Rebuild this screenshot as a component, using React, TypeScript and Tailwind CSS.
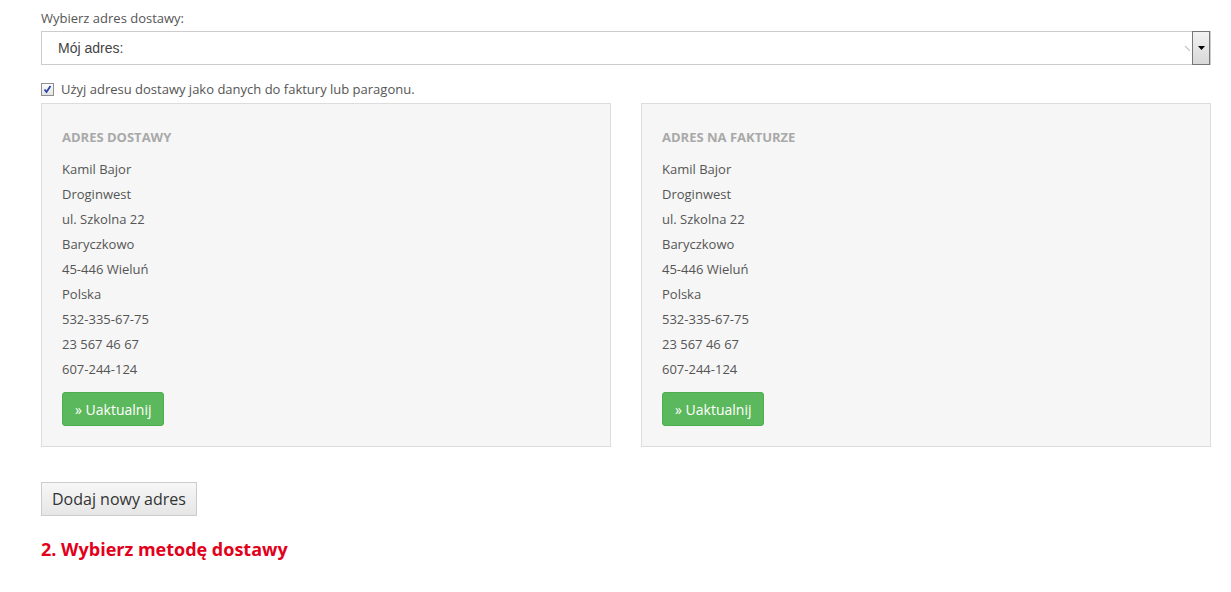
import { useState } from "react";

const lines = [
  "Kamil Bajor",
  "Droginwest",
  "ul. Szkolna 22",
  "Baryczkowo",
  "45-446 Wieluń",
  "Polska",
  "532-335-67-75",
  "23 567 46 67",
  "607-244-124",
];

function AddressCard({ title }: { title: string }) {
  return (
    <div className="border border-[#dddddd] bg-[#f6f6f6] px-5 pt-[23px] pb-5">
      <h3 className="text-[13px] font-bold uppercase text-[#a9a9a9] leading-[20px]">{title}</h3>
      <div className="mt-[10px]">
        {lines.map((l) => (
          <p key={l} className="text-[13px] leading-[25px] text-[#555]">
            {l}
          </p>
        ))}
      </div>
      <button className="mt-[10px] h-[34px] rounded-[3px] border border-[#4cae4c] bg-[#5cb85c] px-[12px] text-[14px] text-white">
        » Uaktualnij
      </button>
    </div>
  );
}

export default function App() {
  const [checked, setChecked] = useState(true);

  return (
    <div className="bg-white min-h-[592px] px-[41px] pt-[8px] font-['Open_Sans',sans-serif] text-[#555]">
      <label className="block text-[13px] leading-[20px]">Wybierz adres dostawy:</label>
      <div className="mt-[3px] flex h-[34px] w-[1170px] items-center border border-[#cccccc] bg-white">
        <span className="flex-1 pl-[16px] font-['Liberation_Sans',Arial,sans-serif] text-[14px] text-[#444]">
          Mój adres:
        </span>
        <span className="mr-[4px] h-[7px] w-[1px] rotate-[-45deg] bg-[#bbb]" />
        <span className="flex h-[34px] w-[18px] items-center justify-center border border-[#777] bg-gradient-to-b from-[#f2f2f2] to-[#d8d8d8]">
          <svg width="7" height="4" viewBox="0 0 7 4">
            <path d="M0 0h7L3.5 4z" fill="#000" />
          </svg>
        </span>
      </div>

      <label
        className="mt-[14px] flex cursor-pointer items-center gap-[7px] text-[13px] leading-[20px]"
        onClick={() => setChecked(!checked)}
      >
        <span className="flex h-[13px] w-[13px] items-center justify-center border border-[#8f8f8f] bg-gradient-to-b from-[#fdfdfd] to-[#e4e4e4]">
          {checked && (
            <svg width="9" height="9" viewBox="0 0 9 9">
              <path d="M1.5 4.5l2 2.5L7.5 1" fill="none" stroke="#2a44a8" strokeWidth="1.8" />
            </svg>
          )}
        </span>
        Użyj adresu dostawy jako danych do faktury lub paragonu.
      </label>

      <div className="mt-[4px] grid w-[1170px] grid-cols-2 gap-[30px]">
        <AddressCard title="Adres dostawy" />
        <AddressCard title="Adres na fakturze" />
      </div>

      <button className="mt-[35px] h-[34px] border border-[#cccccc] bg-gradient-to-b from-[#f7f7f7] to-[#e6e6e6] px-[10px] text-[16px] text-[#333]">
        Dodaj nowy adres
      </button>

      <h2 className="mt-[20px] text-[18px] font-bold text-[#e2001a]">2. Wybierz metodę dostawy</h2>
    </div>
  );
}
